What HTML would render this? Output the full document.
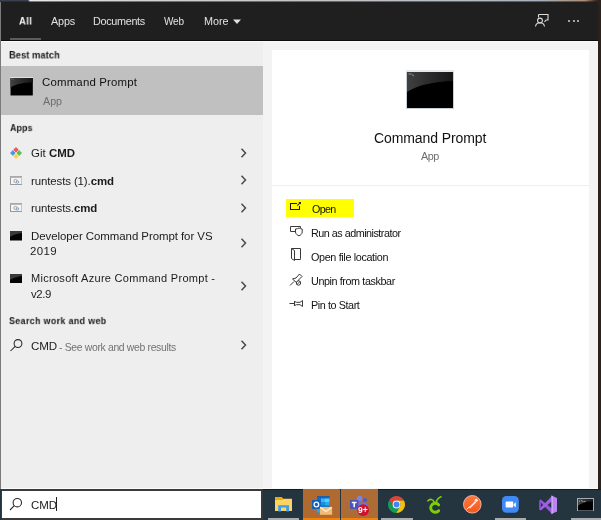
<!DOCTYPE html>
<html><head><meta charset="utf-8"><style>
html,body{margin:0;padding:0;width:601px;height:520px;overflow:hidden;position:relative;font-family:"Liberation Sans", sans-serif;}
b{font-weight:bold;}
</style></head><body>
<div style="position:absolute;left:0px;top:0px;width:601px;height:520px;background:#222;"></div>
<div style="position:absolute;left:0px;top:0px;width:601px;height:2px;background:linear-gradient(90deg,#3b3f52 0,#3b3f52 28px,#e9e9e9 30px,#d5d5d5 120px,#c4c4c4 300px,#b4bcc4 460px,#a5b0bc 540px,#b08a70 585px,#3a2a22 596px);"></div>
<div style="position:absolute;left:0px;top:1px;width:601px;height:1px;background:rgba(31,31,31,0.55);"></div>
<div style="position:absolute;left:1px;top:2px;width:597px;height:39px;background:#1f1f1f;"></div>
<div style="position:absolute;left:0px;top:2px;width:1px;height:487px;background:#7a7a7a;"></div>
<div style="position:absolute;left:1px;top:40px;width:597px;height:1px;background:#0c0c0c;"></div>
<div style="position:absolute;left:1px;top:41px;width:597px;height:1px;background:#f9f9f9;"></div>
<div style="position:absolute;left:1px;top:42px;width:262px;height:446px;background:#eeeeee;"></div>
<div style="position:absolute;left:263px;top:42px;width:335px;height:446px;background:#f3f3f3;"></div>
<div style="position:absolute;left:272px;top:50px;width:317px;height:438px;background:#ffffff;"></div>
<div style="position:absolute;left:1px;top:488px;width:597px;height:1px;background:#fafafa;"></div>
<div style="position:absolute;left:598px;top:0px;width:3px;height:520px;background:#2b211d;"></div>
<div style="position:absolute;left:1px;top:66px;width:262px;height:49px;background:#c0c0c0;"></div>
<div style="position:absolute;left:10px;top:38px;width:31px;height:2px;background:#5c5c5c;"></div>
<div style="position:absolute;left:18.75px;top:17.06px;font-size:10px;line-height:10px;color:#ffffff;font-weight:bold;letter-spacing:0.532px;white-space:nowrap;transform-origin:0 0;transform:scale(0.94);will-change:transform">All</div>
<div style="position:absolute;left:51.0px;top:16.42px;font-size:10px;line-height:10px;color:#e2e2e2;font-weight:normal;letter-spacing:-0.123px;white-space:nowrap;transform-origin:0 0;transform:scale(1.08);will-change:transform">Apps</div>
<div style="position:absolute;left:93.0px;top:16.42px;font-size:10px;line-height:10px;color:#e2e2e2;font-weight:normal;letter-spacing:-0.278px;white-space:nowrap;transform-origin:0 0;transform:scale(1.08);will-change:transform">Documents</div>
<div style="position:absolute;left:164.0px;top:16.6px;font-size:10px;line-height:10px;color:#e2e2e2;font-weight:normal;letter-spacing:-0.15px;white-space:nowrap;transform-origin:0 0;transform:scale(1.0);will-change:transform">Web</div>
<div style="position:absolute;left:204.0px;top:16.42px;font-size:10px;line-height:10px;color:#e2e2e2;font-weight:normal;letter-spacing:0.0px;white-space:nowrap;transform-origin:0 0;transform:scale(1.08);will-change:transform">More</div>
<svg style="position:absolute;left:232px;top:18.5px" width="10" height="6"><path d="M1 0.5 L9 0.5 L5 5 Z" fill="#e0e0e0"/></svg>
<svg style="position:absolute;left:533px;top:12px" width="18" height="17" viewBox="0 0 18 17" fill="none" stroke="#dcdcdc" stroke-width="1.1">
<path d="M5.5 2.5 H15 V8 H13 L11.5 10" />
<path d="M5.5 2.5 V5.5"/>
<circle cx="7" cy="8.5" r="2.4"/>
<path d="M2.5 14.5 C3 11.8 5 10.8 7 10.8 C9 10.8 11 11.8 11.5 14.5"/>
</svg>
<div style="position:absolute;left:568px;top:19.7px;width:2px;height:2px;background:#d0d0d0;border-radius:1px;"></div>
<div style="position:absolute;left:572.7px;top:19.7px;width:2px;height:2px;background:#d0d0d0;border-radius:1px;"></div>
<div style="position:absolute;left:577.3px;top:19.7px;width:2px;height:2px;background:#d0d0d0;border-radius:1px;"></div>
<div style="position:absolute;left:9.25px;top:51.07px;font-size:10px;line-height:10px;color:#1b1b1b;font-weight:bold;letter-spacing:0.072px;white-space:nowrap;transform-origin:0 0;transform:scale(0.93);will-change:transform">Best match</div>
<svg style="position:absolute;left:10px;top:77px" width="23.3" height="19" viewBox="0 0 48 39" preserveAspectRatio="none">
<defs><linearGradient id="g1" x1="0" y1="0" x2="1" y2="0"><stop offset="0" stop-color="#404040"/><stop offset="1" stop-color="#161616"/></linearGradient></defs>
<rect x="0" y="0" width="48" height="39" fill="#c9cfd8"/>
<rect x="0" y="0" width="48" height="2" fill="#e4e7ec"/>
<rect x="1" y="2" width="46" height="36" fill="#000"/>
<path d="M1 2 H47 V11 C30 11.5 12 14.5 1 22 Z" fill="url(#g1)"/>
<path d="M2.5 4 H5 M5.5 4.2 L8 6" stroke="#9a9a9a" stroke-width="0.9"/>
</svg>
<div style="position:absolute;left:42.0px;top:76.86px;font-size:11px;line-height:11px;color:#111;font-weight:normal;letter-spacing:0.163px;white-space:nowrap;transform-origin:0 0;transform:scale(1.04);will-change:transform">Command Prompt</div>
<div style="position:absolute;left:43.0px;top:95.68px;font-size:10px;line-height:10px;color:#6d6d6d;font-weight:normal;letter-spacing:0.0px;white-space:nowrap;transform-origin:0 0;transform:scale(1.07);will-change:transform">App</div>
<div style="position:absolute;left:10.0px;top:124.11px;font-size:10px;line-height:10px;color:#1b1b1b;font-weight:bold;letter-spacing:0.075px;white-space:nowrap;transform-origin:0 0;transform:scale(0.89);will-change:transform">Apps</div>
<svg style="position:absolute;left:9px;top:146px" width="14" height="14" viewBox="0 0 14 14">
<path d="M7 1 L10 4 L7 7 L4 4 Z" fill="#f05a5a"/>
<path d="M10 4 L13 7 L10 10 L7 7 Z" fill="#58c24a"/>
<path d="M7 7 L10 10 L7 13 L4 10 Z" fill="#fbd257"/>
<path d="M4 4 L7 7 L4 10 L1 7 Z" fill="#4d95e8"/>
<path d="M4.2 4.2 L9.8 9.8 M9.8 4.2 L4.2 9.8" stroke="#eeeeee" stroke-width="0.7"/>
</svg>
<div style="position:absolute;left:30.5px;top:148.36px;font-size:11px;line-height:11px;color:#1b1b1b;font-weight:normal;letter-spacing:0.032px;white-space:nowrap;transform-origin:0 0;transform:scale(1.04);will-change:transform">Git <b>CMD</b></div>
<svg style="position:absolute;left:239px;top:146.8px" width="9" height="12" viewBox="0 0 9 12"><path d="M2.5 1.8 L6.5 6 L2.5 10.2" fill="none" stroke="#4a4a4a" stroke-width="1.5"/></svg>
<svg style="position:absolute;left:239px;top:174px" width="9" height="12" viewBox="0 0 9 12"><path d="M2.5 1.8 L6.5 6 L2.5 10.2" fill="none" stroke="#4a4a4a" stroke-width="1.5"/></svg>
<svg style="position:absolute;left:239px;top:201.5px" width="9" height="12" viewBox="0 0 9 12"><path d="M2.5 1.8 L6.5 6 L2.5 10.2" fill="none" stroke="#4a4a4a" stroke-width="1.5"/></svg>
<svg style="position:absolute;left:239px;top:236.5px" width="9" height="12" viewBox="0 0 9 12"><path d="M2.5 1.8 L6.5 6 L2.5 10.2" fill="none" stroke="#4a4a4a" stroke-width="1.5"/></svg>
<svg style="position:absolute;left:239px;top:279.6px" width="9" height="12" viewBox="0 0 9 12"><path d="M2.5 1.8 L6.5 6 L2.5 10.2" fill="none" stroke="#4a4a4a" stroke-width="1.5"/></svg>
<svg style="position:absolute;left:239px;top:338.8px" width="9" height="12" viewBox="0 0 9 12"><path d="M2.5 1.8 L6.5 6 L2.5 10.2" fill="none" stroke="#4a4a4a" stroke-width="1.5"/></svg>
<svg style="position:absolute;left:9.5px;top:176px" width="12.5" height="9" viewBox="0 0 12.5 9">
<rect x="0.5" y="0.5" width="11.5" height="8" fill="#f4f4f4" stroke="#9a9a9a" stroke-width="1"/>
<rect x="0.5" y="0.5" width="11.5" height="1.5" fill="#b8b8b8"/>
<circle cx="5.5" cy="5" r="1.6" fill="none" stroke="#8aa0b8" stroke-width="0.9"/>
<circle cx="7.5" cy="6" r="1.3" fill="none" stroke="#8aa0b8" stroke-width="0.9"/>
</svg>
<div style="position:absolute;left:30.5px;top:175.61px;font-size:11px;line-height:11px;color:#1b1b1b;font-weight:normal;letter-spacing:-0.103px;white-space:nowrap;transform-origin:0 0;transform:scale(1.04);will-change:transform">runtests (1).<b>cmd</b></div>
<svg style="position:absolute;left:9.5px;top:203px" width="12.5" height="9" viewBox="0 0 12.5 9">
<rect x="0.5" y="0.5" width="11.5" height="8" fill="#f4f4f4" stroke="#9a9a9a" stroke-width="1"/>
<rect x="0.5" y="0.5" width="11.5" height="1.5" fill="#b8b8b8"/>
<circle cx="5.5" cy="5" r="1.6" fill="none" stroke="#8aa0b8" stroke-width="0.9"/>
<circle cx="7.5" cy="6" r="1.3" fill="none" stroke="#8aa0b8" stroke-width="0.9"/>
</svg>
<div style="position:absolute;left:30.5px;top:202.86px;font-size:11px;line-height:11px;color:#1b1b1b;font-weight:normal;letter-spacing:-0.105px;white-space:nowrap;transform-origin:0 0;transform:scale(1.04);will-change:transform">runtests.<b>cmd</b></div>
<svg style="position:absolute;left:10px;top:231px" width="12" height="9.5" viewBox="0 0 12 9.5">
<rect x="0" y="0" width="12" height="9.5" fill="#050505"/>
<path d="M0 0 H12 V2 C8 2.3 4 3.5 0 6 Z" fill="#3a3a3a"/>
</svg>
<div style="position:absolute;left:30.5px;top:230.86px;font-size:11px;line-height:11px;color:#1b1b1b;font-weight:normal;letter-spacing:-0.051px;white-space:nowrap;transform-origin:0 0;transform:scale(1.04);will-change:transform">Developer Command Prompt for VS</div>
<div style="position:absolute;left:29.5px;top:246.36px;font-size:11px;line-height:11px;color:#1b1b1b;font-weight:normal;letter-spacing:0.385px;white-space:nowrap;transform-origin:0 0;transform:scale(1.04);will-change:transform">2019</div>
<svg style="position:absolute;left:10px;top:273.5px" width="12" height="9.5" viewBox="0 0 12 9.5">
<rect x="0" y="0" width="12" height="9.5" fill="#050505"/>
<path d="M0 0 H12 V2 C8 2.3 4 3.5 0 6 Z" fill="#3a3a3a"/>
</svg>
<div style="position:absolute;left:30.5px;top:273.4px;font-size:11px;line-height:11px;color:#1b1b1b;font-weight:normal;letter-spacing:0.297px;white-space:nowrap;transform-origin:0 0;transform:scale(1.0);will-change:transform">Microsoft Azure Command Prompt -</div>
<div style="position:absolute;left:30.5px;top:288.86px;font-size:11px;line-height:11px;color:#1b1b1b;font-weight:normal;letter-spacing:-0.385px;white-space:nowrap;transform-origin:0 0;transform:scale(1.04);will-change:transform">v2.9</div>
<div style="position:absolute;left:8.5px;top:316.61px;font-size:10px;line-height:10px;color:#1b1b1b;font-weight:bold;letter-spacing:0.387px;white-space:nowrap;transform-origin:0 0;transform:scale(0.89);will-change:transform">Search work and web</div>
<svg style="position:absolute;left:9px;top:338px" width="15" height="14" viewBox="0 0 15 14" fill="none" stroke="#2a2a2a" stroke-width="1.05">
<circle cx="9" cy="5.5" r="3.9"/><path d="M6.2 8.3 L1.5 13"/></svg>
<div style="position:absolute;left:30.8px;top:340.6px;font-size:10px;line-height:10px;color:#1b1b1b;font-weight:normal;letter-spacing:-0.1px;white-space:nowrap;transform-origin:0 0;transform:scale(1.16);will-change:transform">CMD</div>
<div style="position:absolute;left:59.4px;top:342.96px;font-size:10px;line-height:10px;color:#727272;font-weight:normal;letter-spacing:-0.319px;white-space:nowrap;transform-origin:0 0;transform:scale(1.04);will-change:transform">- See work and web results</div>
<svg style="position:absolute;left:406px;top:70px" width="48" height="39" viewBox="0 0 48 39" preserveAspectRatio="none">
<defs><linearGradient id="g2" x1="0" y1="0" x2="1" y2="0"><stop offset="0" stop-color="#404040"/><stop offset="1" stop-color="#161616"/></linearGradient></defs>
<rect x="0" y="0" width="48" height="39" fill="#c9cfd8"/>
<rect x="0" y="0" width="48" height="2" fill="#e4e7ec"/>
<rect x="1" y="2" width="46" height="36" fill="#000"/>
<path d="M1 2 H47 V11 C30 11.5 12 14.5 1 22 Z" fill="url(#g2)"/>
<path d="M2.5 4 H5 M5.5 4.2 L8 6" stroke="#9a9a9a" stroke-width="0.9"/>
</svg>
<div style="position:absolute;left:374.0px;top:130.6px;font-size:14px;line-height:14px;color:#111;font-weight:normal;letter-spacing:-0.092px;white-space:nowrap;transform-origin:0 0;transform:scale(1.0);will-change:transform">Command Prompt</div>
<div style="position:absolute;left:421.0px;top:151.42px;font-size:10px;line-height:10px;color:#6d6d6d;font-weight:normal;letter-spacing:-0.463px;white-space:nowrap;transform-origin:0 0;transform:scale(1.08);will-change:transform">App</div>
<div style="position:absolute;left:272px;top:185px;width:317px;height:1px;background:#efefef;"></div>
<div style="position:absolute;left:286px;top:199px;width:68px;height:18px;background:#ffff00;"></div>
<svg style="position:absolute;left:288px;top:199px" width="16" height="13" viewBox="0 0 16 13" fill="none" stroke="#1a1a1a" stroke-width="1.05">
<path d="M9 4.5 H2.5 V10.5 H11.5 V7"/><path d="M9.3 6.7 L12 4"/><path d="M10.4 3 L13 3 L13 5.6 Z" fill="#1a1a1a" stroke="none"/></svg>
<div style="position:absolute;left:311.75px;top:203.93px;font-size:10px;line-height:10px;color:#111;font-weight:normal;letter-spacing:-0.623px;white-space:nowrap;transform-origin:0 0;transform:scale(1.07);will-change:transform">Open</div>
<svg style="position:absolute;left:288px;top:223px" width="16" height="15" viewBox="0 0 16 15" fill="none" stroke="#3a3a3a" stroke-width="1">
<path d="M7 8.5 H2.5 V3.5 H12.5 V5"/><path d="M7.5 6 C9 6 10 5.5 11 5 C12 5.5 13 6 14.2 6 V9 C14.2 11 12.5 12.3 11 12.8 C9.5 12.3 7.5 11 7.5 9 Z"/></svg>
<div style="position:absolute;left:311.0px;top:227.92px;font-size:10px;line-height:10px;color:#111;font-weight:normal;letter-spacing:-0.468px;white-space:nowrap;transform-origin:0 0;transform:scale(1.08);will-change:transform">Run as administrator</div>
<svg style="position:absolute;left:289px;top:247px" width="14" height="16" viewBox="0 0 14 16" fill="none" stroke="#3a3a3a" stroke-width="1">
<path d="M2.5 1.5 H11.5 V11 C11.5 12 11.5 12.5 11.5 12.5 H5.5"/><path d="M2.5 1.5 L5.5 3.5 V13.5 L2.5 11.5 Z"/></svg>
<div style="position:absolute;left:311.0px;top:252.42px;font-size:10px;line-height:10px;color:#111;font-weight:normal;letter-spacing:-0.327px;white-space:nowrap;transform-origin:0 0;transform:scale(1.08);will-change:transform">Open file location</div>
<svg style="position:absolute;left:288px;top:272px" width="16" height="15" viewBox="0 0 16 15" fill="none" stroke="#3a3a3a" stroke-width="1">
<path d="M2 13.5 L6 9.5"/><path d="M4.5 7 L8 6 L11.5 2 L14 4.5 L10.5 8 L9.5 11.5 Z"/><circle cx="10.5" cy="11" r="2.2" fill="#fff"/><path d="M9 12.5 L12 9.5"/></svg>
<div style="position:absolute;left:311.0px;top:276.42px;font-size:10px;line-height:10px;color:#111;font-weight:normal;letter-spacing:-0.381px;white-space:nowrap;transform-origin:0 0;transform:scale(1.08);will-change:transform">Unpin from taskbar</div>
<svg style="position:absolute;left:288px;top:298px" width="16" height="12" viewBox="0 0 16 12" fill="none" stroke="#3a3a3a" stroke-width="1">
<path d="M1.5 5.5 H6.5"/><path d="M6.5 3 V8 M6.5 3.5 L8.5 4.3 H12 L14.5 2.5 V8.5 L12 6.7 H8.5 L6.5 7.5"/></svg>
<div style="position:absolute;left:311.0px;top:300.42px;font-size:10px;line-height:10px;color:#111;font-weight:normal;letter-spacing:-0.387px;white-space:nowrap;transform-origin:0 0;transform:scale(1.08);will-change:transform">Pin to Start</div>
<div style="position:absolute;left:0px;top:489px;width:261px;height:31px;background:#3a3a3a;"></div>
<div style="position:absolute;left:0px;top:489px;width:1px;height:31px;background:#23343e;"></div>
<div style="position:absolute;left:2px;top:491px;width:259px;height:27px;background:#ffffff;"></div>
<svg style="position:absolute;left:8px;top:496px" width="16" height="16" viewBox="0 0 16 16" fill="none" stroke="#2a2a2a" stroke-width="1.1">
<circle cx="9.3" cy="6.7" r="4.2"/><path d="M6.3 9.7 L2 14"/></svg>
<div style="position:absolute;left:31px;top:500.3px;font-size:10px;line-height:10px;color:#1b1b1b;font-weight:normal;letter-spacing:-0.05px;white-space:nowrap;transform-origin:0 0;transform:scale(1.15);will-change:transform">CMD</div>
<div style="position:absolute;left:56px;top:497px;width:1px;height:14px;background:#222;"></div>
<div style="position:absolute;left:261px;top:489px;width:340px;height:31px;background:#243540;"></div>
<div style="position:absolute;left:261px;top:489px;width:340px;height:1px;background:#0f1d26;"></div>
<div style="position:absolute;left:261px;top:489px;width:2px;height:31px;background:#34393d;"></div>
<div style="position:absolute;left:303px;top:489px;width:37px;height:31px;background:#b06a2f;"></div>
<div style="position:absolute;left:341px;top:489px;width:37px;height:31px;background:#ad6b35;"></div>
<div style="position:absolute;left:303px;top:518px;width:37px;height:2px;background:#f0830f;"></div>
<div style="position:absolute;left:341px;top:518px;width:37px;height:2px;background:#f0830f;"></div>
<div style="position:absolute;left:268px;top:518px;width:31px;height:2px;background:#a9adb0;"></div>
<div style="position:absolute;left:381px;top:518px;width:32px;height:2px;background:#a9adb0;"></div>
<div style="position:absolute;left:495px;top:518px;width:31px;height:2px;background:#a9adb0;"></div>
<div style="position:absolute;left:571px;top:518px;width:30px;height:2px;background:#a9adb0;"></div>
<svg style="position:absolute;left:275px;top:496px" width="18" height="17" viewBox="0 0 18 17">
<path d="M0 1 H6.5 L8 2.8 H17 V15 H0 Z" fill="#fcd462"/>
<path d="M0 1 H6.5 L8 2.8 V4 H0 Z" fill="#eea80a"/>
<path d="M3.2 15.5 V9.2 H14 V15.5 H11.2 V11.4 H6 V15.5 Z" fill="#3d9cf0"/>
</svg>
<svg style="position:absolute;left:310px;top:495px" width="24" height="21" viewBox="0 0 24 21">
<rect x="7" y="1" width="12.5" height="16.7" fill="#0f6cc8"/>
<rect x="7" y="1" width="12.5" height="1.5" fill="#1a5fb0"/>
<rect x="11" y="3.5" width="4" height="3.5" fill="#3ab6f0"/>
<rect x="15" y="3.5" width="4.5" height="3.5" fill="#50d0fa"/>
<rect x="11" y="7" width="4" height="3.5" fill="#1490e0"/>
<rect x="15" y="7" width="4.5" height="3.5" fill="#28a8ee"/>
<rect x="7" y="13" width="3" height="4.7" fill="#2aa0f0"/>
<rect x="2" y="4.9" width="8.4" height="9" rx="0.5" fill="#0a63c0"/>
<circle cx="6.4" cy="9.5" r="2.3" fill="none" stroke="#f4f8ff" stroke-width="1.3"/>
<rect x="9.9" y="11.9" width="12.2" height="7.9" fill="#f2bb74"/>
<path d="M10.3 12.3 L16 16.5 L21.7 12.3" fill="none" stroke="#fff4de" stroke-width="1.2"/>
</svg>
<svg style="position:absolute;left:347px;top:495px;will-change:transform" width="24" height="22" viewBox="0 0 24 22">
<circle cx="12.6" cy="3.4" r="2.7" fill="#7b83eb"/>
<circle cx="18" cy="5" r="2.1" fill="#5059c9"/>
<rect x="10" y="7.5" width="10" height="8" rx="1.5" fill="#6a74e0"/>
<rect x="3" y="4.9" width="8.4" height="9" rx="0.8" fill="#4b53bc"/>
<path d="M4.8 7.4 H9.6 M7.2 7.4 V12.2" stroke="#fff" stroke-width="1.5"/>
<circle cx="16.1" cy="15.1" r="5.9" fill="#d0102e"/>
<text x="15.9" y="18.3" font-family="Liberation Sans" font-weight="bold" font-size="8.5" fill="#fff" text-anchor="middle">9+</text>
</svg>
<svg style="position:absolute;left:387px;top:495px" width="19" height="19" viewBox="-9.5 -9.5 19 19">
<path d="M0 -3.9 L7.55 -3.9 A8.5 8.5 0 0 0 -7.15 -4.59 L-3.38 1.95 A3.9 3.9 0 0 1 0 -3.9 Z" fill="#db4437"/>
<path d="M3.38 1.95 L-0.4 8.49 A8.5 8.5 0 0 0 7.55 -3.9 L0 -3.9 A3.9 3.9 0 0 1 3.38 1.95 Z" fill="#f4c20d"/>
<path d="M-3.38 1.95 L-7.15 -4.59 A8.5 8.5 0 0 0 -0.4 8.49 L3.38 1.95 A3.9 3.9 0 0 1 -3.38 1.95 Z" fill="#0f9d58"/>
<circle r="3.9" fill="#fff"/><circle r="3.0" fill="#4285f4"/>
</svg>
<svg style="position:absolute;left:426px;top:494px" width="18" height="21" viewBox="0 0 18 21" fill="none" stroke="#7fcf05" stroke-linecap="round">
<path d="M12.65 10.9 A4.5 4.5 0 1 0 12.65 16.7" stroke-width="2.9"/>
<path d="M2 6.8 C4 4.5 7 5 8.5 8.5" stroke-width="1.7"/>
<path d="M10 8.5 C11 5.5 13 3.5 15 2.8" stroke-width="1.7"/>
</svg>
<svg style="position:absolute;left:463px;top:495px" width="19" height="19" viewBox="0 0 19 19">
<defs><linearGradient id="pg" x1="0" y1="0" x2="0" y2="1"><stop offset="0" stop-color="#ff7840"/><stop offset="1" stop-color="#f2581f"/></linearGradient></defs>
<circle cx="9.3" cy="9.3" r="8.8" fill="url(#pg)" stroke="#f6d0bc" stroke-width="0.8"/>
<path d="M3.8 14.3 L6.5 11.5" stroke="#fff2ea" stroke-width="1"/>
<path d="M5.8 12.5 L11.8 6.2 L13.2 7.4 L7 13.4 Z" fill="#ffe8dc"/>
<circle cx="13.2" cy="5.2" r="1.5" fill="#fff4ee"/>
</svg>
<svg style="position:absolute;left:501.5px;top:496px" width="17" height="17" viewBox="0 0 17 17">
<rect x="0" y="0" width="16.8" height="16.8" rx="4.5" fill="#3f8af5"/>
<rect x="3.6" y="5.6" width="7.6" height="6" rx="1" fill="#fff"/>
<path d="M11.5 8.4 L13.8 6.2 V11.4 L11.5 9.2 Z" fill="#fff"/>
</svg>
<svg style="position:absolute;left:538px;top:495px" width="20" height="20" viewBox="0 0 20 20">
<path d="M1 5.8 L2.8 4.6 L14 13.8 V19 Z" fill="#9658dc"/>
<path d="M1 14.2 L2.8 15.4 L14 6.2 V1 Z" fill="#9d62e2"/>
<path d="M1 5.8 V14.2 L3 13 V7 Z" fill="#8548cc"/>
<path d="M13.5 0.5 L19 3 V16.5 L13.5 19 Z" fill="#b985f2"/>
<path d="M13.5 0.5 L15 1.2 V18.3 L13.5 19 Z" fill="#cf9ffa"/>
</svg>
<svg style="position:absolute;left:577px;top:497.5px" width="17" height="13.5" viewBox="0 0 17 13.5">
<defs><linearGradient id="tg" x1="0" y1="0" x2="1" y2="0"><stop offset="0" stop-color="#484848"/><stop offset="1" stop-color="#1a1a1a"/></linearGradient></defs>
<rect x="0.5" y="0.5" width="16" height="12.5" fill="#000" stroke="#a3aab2" stroke-width="1"/>
<path d="M1 1 H16 V3.2 C11 3.4 5 4.5 1 7.5 Z" fill="url(#tg)"/>
<path d="M2.5 2.6 V3.8 M4 2.4 L6 3.6 M6.5 3.6 H8.5" stroke="#bbb" stroke-width="0.8"/>
</svg>
</body></html>
